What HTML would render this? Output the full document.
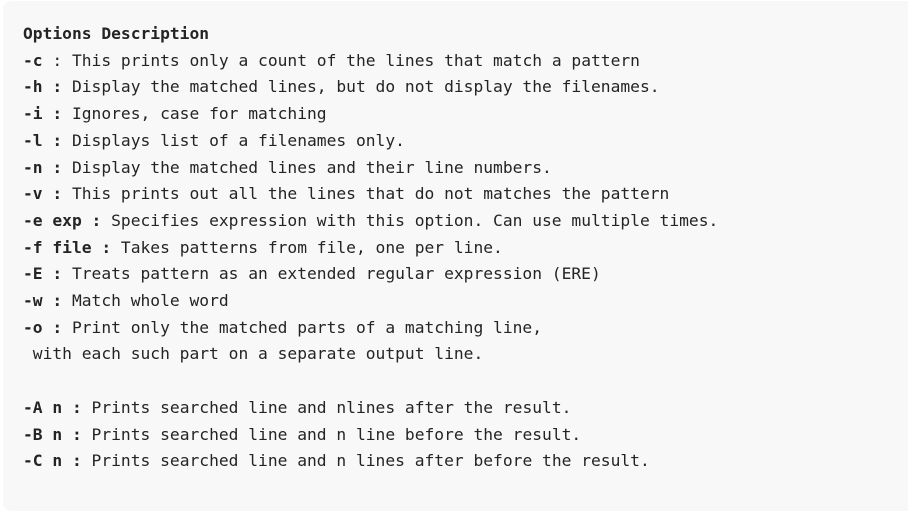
<!DOCTYPE html>
<html><head><meta charset="utf-8"><style>
html,body{margin:0;padding:0;background:#fff;width:908px;height:493px;overflow:hidden}
.box{position:absolute;left:3px;top:1px;width:920px;height:510px;background:#f8f8f8;border-radius:8px}
pre{position:absolute;left:23px;top:21px;margin:0;font-family:"DejaVu Sans Mono","Liberation Mono",monospace;font-size:16.28px;line-height:26.7px;color:#242424}
b{font-weight:bold}
</style></head><body><div class="box"></div><pre><b>Options Description</b>
<b>-c</b> : This prints only a count of the lines that match a pattern
<b>-h :</b> Display the matched lines, but do not display the filenames.
<b>-i :</b> Ignores, case for matching
<b>-l :</b> Displays list of a filenames only.
<b>-n :</b> Display the matched lines and their line numbers.
<b>-v :</b> This prints out all the lines that do not matches the pattern
<b>-e exp :</b> Specifies expression with this option. Can use multiple times.
<b>-f file :</b> Takes patterns from file, one per line.
<b>-E :</b> Treats pattern as an extended regular expression (ERE)
<b>-w :</b> Match whole word
<b>-o :</b> Print only the matched parts of a matching line,
 with each such part on a separate output line.

<b>-A n :</b> Prints searched line and nlines after the result.
<b>-B n :</b> Prints searched line and n line before the result.
<b>-C n :</b> Prints searched line and n lines after before the result.</pre></body></html>
